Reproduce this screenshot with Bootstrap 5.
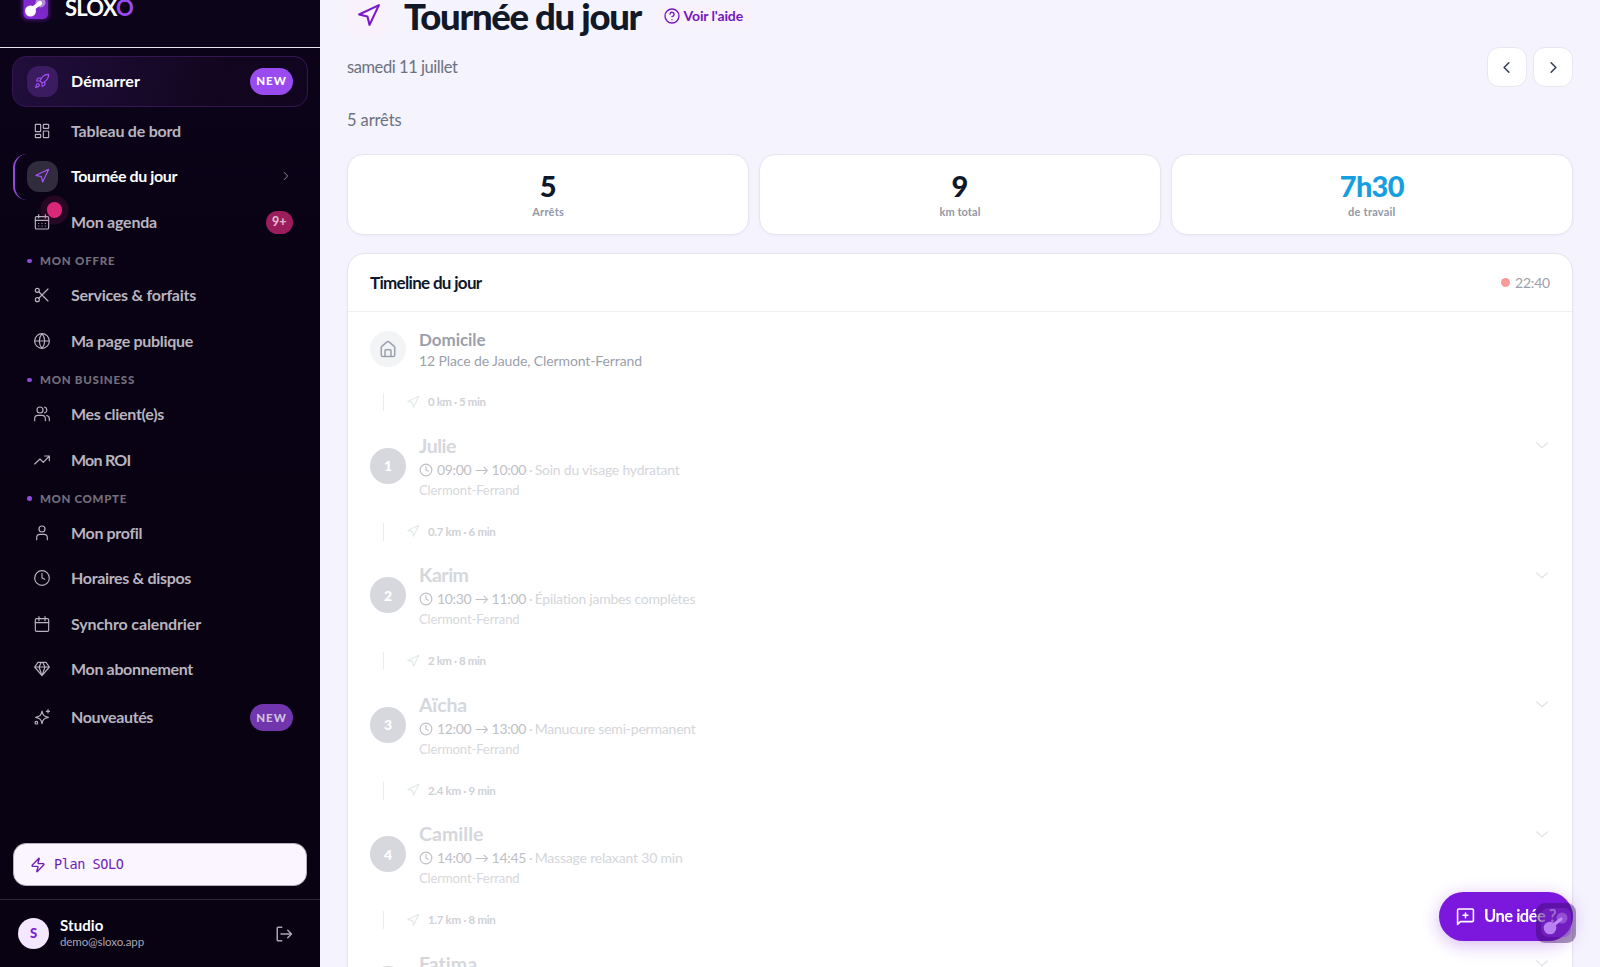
<!DOCTYPE html>
<html lang="fr">
<head>
<meta charset="utf-8">
<meta name="viewport" content="width=device-width, initial-scale=1">
<title>SLOXO – Tournée du jour</title>
<link href="https://cdn.jsdelivr.net/npm/bootstrap@5.3.0/dist/css/bootstrap.min.css" rel="stylesheet">
<style>
  body { font-family: Lato, "Liberation Sans", sans-serif; background: #f5f3fe; height: 967px; overflow: hidden; color: #0f172a; }
  svg { fill: none; stroke: currentColor; stroke-width: 2; stroke-linecap: round; stroke-linejoin: round; flex: none; display: block; }
  .blob { stroke: none; }
  [data-w] { white-space: nowrap; }
  .side { width: 320px; height: 967px; background: linear-gradient(#0c0419, #090214 30%, #080212); color: #fff; }
  .brand-row { height: 48px; border-bottom: 1.5px solid #e5e3ec; overflow: hidden; padding-left: 17px; }
  .brand-logo { width: 37px; height: 31px; margin-top: -7px; }
  .brand-name { font-size: 22px; font-weight: 700; line-height: 26px; margin: -5px 0 0 11px; }
  .violet { color: #9a4bf2; }
  .side-item { height: 45.55px; padding: 0 14px 0 14px; margin: 0 13px; color: #b8b4bf; font-weight: 700; font-size: 16px; }
  .side-item > span { margin-top: -1px; }
  .side-item .bubble { width: 31px; height: 31px; border-radius: 12px; margin-right: 13px; flex: none; }
  .side-item svg { width: 16px; height: 16px; stroke-width: 1.75; margin-top: -1px; margin-left: -1px; }
  .start { height: 51px; margin: 8px 12px 1.5px; padding: 0 14px; border: 1px solid #351653; border-radius: 14px; background: linear-gradient(100deg, #210e3c, #12061f 70%, #100520); color: #fff; }
  .start .bubble { background: #3b1c61; color: #a14ff2; }
  .start > * { position: relative; top: -.5px; }
  .current { color: #fff; border-left: 2px solid #9049d8; border-radius: 14px; padding-left: 12px; }
  .current .bubble { background: #302b3d; color: #a855f7; }
  .tall { height: 49px; }
  .pill { border-radius: 14px; font-weight: 900; color: #fff; display: flex; align-items: center; justify-content: center; }
  .pill-new { width: 43px; height: 27px; background: #9a4bef; font-size: 11.5px; }
  .pill-dim { background: #7136ad; color: #cfc3dd; }
  .pill-count { width: 27.500px; height: 22.5px; background: #9c1d5c; font-size: 12.5px; color: #dfb7cd; }
  .alert-dot { width: 15.5px; height: 15.5px; background: #db2777; border-radius: 50%; box-shadow: 0 0 0 6.5px rgba(219,39,119,.14); position: absolute; left: 19.5px; top: -4.5px; }
  .side-head { height: 27.75px; padding: 4px 0 0 27px; font-size: 11.5px; font-weight: 900; color: #736e7b; }
  .side-head i { width: 4.5px; height: 4.5px; border-radius: 50%; background: #9249dc; margin-right: 8.5px; }
  .plan { margin: 0 13px 13px; height: 43px; border-radius: 13px; background: #faf5ff; border: 1px solid #b8aec4; color: #6f1fb8; font-family: "DejaVu Sans Mono", monospace; font-size: 13.5px; padding-left: 16px; }
  .user { height: 68px; border-top: 1px solid #2b2635; padding: 0 27px 0 18px; }
  .avatar { width: 31px; height: 31px; border-radius: 50%; background: #f3e8ff; color: #7722d0; font-size: 13px; font-weight: 900; }
  .page { padding: 0 27px; }
  .title-row { height: 38px; }
  .title-icon { width: 43px; height: 44px; margin-top: -8px; border-radius: 13px; background: #f9f2fd; color: #7919c9; }
  h1 { font-size: 36.5px; font-weight: 900; line-height: 38px; margin: -6px 0 0 14px; color: #111827; }
  .help { color: #7416bd; background: #f8f2fd; font-size: 14px; font-weight: 700; padding: 0 8px 0 7px; height: 25px; border-radius: 12px; margin: -7px 0 0 15.5px; }
  .muted { color: #6b7280; font-size: 16.5px; line-height: 20px; margin-top: -1px; }
  .step { width: 40px; height: 40px; background: #fff; border: 1px solid #e8e7ee; border-radius: 12px; color: #374151; }
  .panel { background: #fff; border: 1px solid #e6e5ed; box-shadow: 0 1px 3px rgba(60,40,90,.04); }
  .stat { height: 81px; border-radius: 16px; padding-top: 14px; }
  .stat b { font-size: 29px; line-height: 34px; font-weight: 900; }
  .stat span { font-size: 11px; line-height: 14px; color: #9298a6; font-weight: 700; margin-top: 2px; }
  .timeline { border-radius: 18px 18px 0 0; height: 760px; margin-top: 17.5px; }
  .timeline-head { height: 58.5px; padding: 0 22px; border-bottom: 1px solid #f0f0f3; }
  .timeline-head b { font-size: 17px; }
  .home { height: 80px; padding: 19px 22px 0; }
  .dot { width: 36px; height: 36px; border-radius: 50%; flex: none; margin-right: 13px; }
  .home .dot { background: #f3f4f6; color: #9ca0ac; }
  .home b { font-size: 17px; line-height: 20px; color: #9b9fac; margin-top: -1px; }
  .home span { font-size: 14px; line-height: 20px; color: #9b9fac; margin-top: 1px; }
  .leg { height: 20px; padding-left: 35px; color: #cfd1d6; font-size: 11.5px; font-weight: 700; }
  .leg i { width: 1px; height: 18px; background: #ececf0; margin-right: 21.5px; }
  .leg svg { color: #e3e9ea; margin-right: 8.5px; margin-top: -1px; }
  .leg span { margin-top: -.5px; }
  .stop { height: 109.5px; padding: 0 22.5px 0 22px; }
  .stop .dot { background: #d7d8dd; color: #fff; font-weight: 900; font-size: 14px; margin-bottom: 2px; }
  .stop b { font-size: 19.5px; line-height: 24px; color: #d5d7dc; }
  .stop .when { font-size: 14px; line-height: 22px; height: 22px; margin-top: 1px; color: #bec0c5; }
  .stop .what { color: #d4d6da; }
  .stop .city { font-size: 13px; line-height: 19px; color: #d6d8dc; }
  .idea { right: 27px; bottom: 26.5px; width: 134px; height: 49px; border-radius: 25px; background: #7c18dd; color: #fff; font-size: 16.5px; font-weight: 700; padding-left: 17px; box-shadow: 0 4px 18px rgba(124,24,221,.3); }
  .mark-float { right: 24px; bottom: 24px; width: 40px; height: 40px; border-radius: 9px; background: rgba(52,10,92,.42); }
</style>
</head>
<body>
<svg width="0" height="0" class="position-absolute">
  <symbol id="send" viewBox="0 0 24 24"><path d="M3 11 22 2 13 21 11 13z"/></symbol>
  <symbol id="clock" viewBox="0 0 24 24"><circle cx="12" cy="12" r="10"/><path d="M12 6v6l4 2"/></symbol>
  <symbol id="down" viewBox="0 0 24 24"><path d="m4 9 8 7 8-7"/></symbol>
  <symbol id="right" viewBox="0 0 24 24"><path d="m9 18 6-6-6-6"/></symbol>
  <symbol id="left" viewBox="0 0 24 24"><path d="m15 18-6-6 6-6"/></symbol>
</svg>
<div class="d-flex">
  <aside class="side d-flex flex-column flex-shrink-0">
    <div class="brand-row d-flex align-items-start flex-shrink-0">
      <svg class="brand-logo blob" viewBox="0 0 37 31">
        <defs><linearGradient id="lg" x1="0" x2="1" y1="1" y2="0"><stop stop-color="#8a2be2"/><stop offset="1" stop-color="#6f25ad"/></linearGradient><filter id="glow" x="-50%" y="-50%" width="200%" height="200%"><feGaussianBlur stdDeviation="2"/></filter></defs>
        <rect x="5" y="0" width="27" height="27" rx="5" fill="#7a22d0" opacity=".6" filter="url(#glow)"/>
        <rect x="6.500" y="-2" width="24.500" height="28" rx="5" fill="url(#lg)"/>
        <circle cx="23.500" cy="9.500" r="5" fill="#fff" opacity=".45"/>
        <path d="M14 17 23 10" stroke="#fff" stroke-width="4"/><circle cx="13.500" cy="18" r="5.500" fill="#fff"/><circle cx="22.500" cy="10.500" r="2.300" fill="#fff"/>
      </svg>
      <div class="brand-name" data-w="68">SLOX<span class="violet">O</span></div>
    </div>
    <div class="side-item start d-flex align-items-center flex-shrink-0">
      <div class="bubble d-flex align-items-center justify-content-center"><svg viewBox="0 0 24 24"><path d="M4.500 16.500c-1.500 1.300-2 5-2 5s3.700-.5 5-2c.7-.8.7-2.100-.1-2.900a2.200 2.200 0 0 0-2.900-.1zM12 15l-3-3a22 22 0 0 1 2-4A12.900 12.900 0 0 1 22 2c0 2.700-.8 7.500-6 11a22.400 22.400 0 0 1-4 2zM9 12H4s.5-3 2-4c1.600-1.100 5 0 5 0M12 15v5s3-.5 4-2c1.100-1.600 0-5 0-5"/></svg></div>
      <span data-w="69">Démarrer</span><div class="pill pill-new ms-auto"><span data-w="30.500">NEW</span></div>
    </div>
    <div class="side-item d-flex align-items-center flex-shrink-0">
      <div class="bubble d-flex align-items-center justify-content-center"><svg viewBox="0 0 24 24"><rect x="2" y="2" width="8" height="11" rx="1"/><rect x="14" y="2" width="8" height="6" rx="1"/><rect x="14" y="12" width="8" height="10" rx="1"/><rect x="2" y="17" width="8" height="5" rx="1"/></svg></div><span data-w="110">Tableau de bord</span>
    </div>
    <div class="side-item current d-flex align-items-center flex-shrink-0">
      <div class="bubble d-flex align-items-center justify-content-center"><svg><use href="#send"/></svg></div><span data-w="106">Tournée du jour</span>
      <svg class="ms-auto" style="width:14px;height:14px;color:#7d7887"><use href="#right"/></svg>
    </div>
    <div class="side-item d-flex align-items-center flex-shrink-0">
      <div class="bubble position-relative d-flex align-items-center justify-content-center"><svg viewBox="0 0 24 24"><rect x="2" y="4" width="20" height="18.500" rx="2"/><path d="M7 1v5M17 1v5M2 9.500h20M7 14h.1M12 14h.1M17 14h.1M7 18h.1M12 18h.1M17 18h.1"/></svg><div class="alert-dot"></div></div><span data-w="86">Mon agenda</span><div class="pill pill-count ms-auto">9+</div>
    </div>
    <div class="side-head d-flex align-items-center flex-shrink-0"><i></i><span data-w="75.500">MON OFFRE</span></div>
    <div class="side-item d-flex align-items-center flex-shrink-0">
      <div class="bubble d-flex align-items-center justify-content-center"><svg viewBox="0 0 24 24"><circle cx="5" cy="5" r="3"/><circle cx="5" cy="19" r="3"/><path d="M7.100 7.100 21 21M21 3 7.100 16.900"/></svg></div><span data-w="125">Services &amp; forfaits</span>
    </div>
    <div class="side-item d-flex align-items-center flex-shrink-0">
      <div class="bubble d-flex align-items-center justify-content-center"><svg viewBox="0 0 24 24"><circle cx="12" cy="12" r="11"/><path d="M1 12h22M12 1a17 17 0 0 0 0 22 17 17 0 0 0 0-22"/></svg></div><span data-w="122">Ma page publique</span>
    </div>
    <div class="side-head d-flex align-items-center flex-shrink-0"><i></i><span data-w="95">MON BUSINESS</span></div>
    <div class="side-item d-flex align-items-center flex-shrink-0">
      <div class="bubble d-flex align-items-center justify-content-center"><svg viewBox="0 0 24 24"><path d="M17 22v-3a5 5 0 0 0-5-5H6a5 5 0 0 0-5 5v3"/><circle cx="9" cy="6" r="4.500"/><path d="M23 22v-3a5 5 0 0 0-4-4.800M16 1.700a4.500 4.500 0 0 1 0 8.700"/></svg></div><span data-w="93">Mes client(e)s</span>
    </div>
    <div class="side-item d-flex align-items-center flex-shrink-0">
      <div class="bubble d-flex align-items-center justify-content-center"><svg viewBox="0 0 24 24"><path d="M23 6 14 15.500 9 10.500 1 18M16 6h7v7"/></svg></div><span data-w="59.500">Mon ROI</span>
    </div>
    <div class="side-head d-flex align-items-center flex-shrink-0"><i></i><span data-w="87">MON COMPTE</span></div>
    <div class="side-item d-flex align-items-center flex-shrink-0">
      <div class="bubble d-flex align-items-center justify-content-center"><svg viewBox="0 0 24 24"><path d="M20 22v-3a5 5 0 0 0-5-5H9a5 5 0 0 0-5 5v3"/><circle cx="12" cy="6" r="4.500"/></svg></div><span data-w="71">Mon profil</span>
    </div>
    <div class="side-item d-flex align-items-center flex-shrink-0">
      <div class="bubble d-flex align-items-center justify-content-center"><svg viewBox="0 0 24 24"><circle cx="12" cy="12" r="11"/><path d="M12 5.500V12l4 2"/></svg></div><span data-w="120">Horaires &amp; dispos</span>
    </div>
    <div class="side-item d-flex align-items-center flex-shrink-0">
      <div class="bubble d-flex align-items-center justify-content-center"><svg viewBox="0 0 24 24"><rect x="2" y="4" width="20" height="19" rx="2"/><path d="M7.500 1v6M16.500 1v6M2 10h20"/></svg></div><span data-w="130">Synchro calendrier</span>
    </div>
    <div class="side-item d-flex align-items-center flex-shrink-0">
      <div class="bubble d-flex align-items-center justify-content-center"><svg viewBox="0 0 24 24"><path d="M6 2h12l5 7-11 13L1 9zM1 9h22M11 2 7.500 9 12 22l4.500-13L13 2"/></svg></div><span data-w="122">Mon abonnement</span>
    </div>
    <div class="side-item tall d-flex align-items-center flex-shrink-0">
      <div class="bubble d-flex align-items-center justify-content-center"><svg viewBox="0 0 24 24"><path d="M12 3c1 6 3 8 9.500 9.500C15 14 13 16 12 22c-1-6-3-8-9.500-9.500C9 11 11 9 12 3zM21 1v5M18.500 3.500h5"/><circle cx="3.500" cy="20.500" r="2"/></svg></div><span data-w="82">Nouveautés</span><div class="pill pill-new pill-dim ms-auto"><span data-w="30.500">NEW</span></div>
    </div>
    <div class="plan mt-auto d-flex align-items-center flex-shrink-0">
      <svg width="16" height="16" viewBox="0 0 24 24" class="me-2"><path d="M4 14a1 1 0 0 1-.8-1.600L13 2.200a.5.5 0 0 1 .9.500L12 8.700A1 1 0 0 0 13 10h7a1 1 0 0 1 .8 1.600L11 21.800a.5.5 0 0 1-.9-.5L12 15.300A1 1 0 0 0 11 14z"/></svg><span data-w="69.500">Plan SOLO</span>
    </div>
    <div class="user d-flex align-items-center flex-shrink-0">
      <div class="avatar d-flex align-items-center justify-content-center">S</div>
      <div class="d-flex flex-column align-items-start" style="margin-left:11px;margin-top:-2px"><b data-w="43.500" style="font-size:15px;line-height:18px">Studio</b><span data-w="84" style="font-size:11.500px;line-height:16px;color:#aaa6b1">demo@sloxo.app</span></div>
      <svg class="ms-auto" width="18" height="18" viewBox="0 0 24 24" style="color:#aaa6b1"><path d="M9 21H4a1 1 0 0 1-1-1V4a1 1 0 0 1 1-1h5M8 12h14M17 7l5 5-5 5"/></svg>
    </div>
  </aside>

  <main class="page flex-grow-1">
    <div class="title-row d-flex align-items-center">
      <div class="title-icon d-flex align-items-center justify-content-center"><svg width="25" height="25"><use href="#send"/></svg></div>
      <h1><span data-w="237">Tournée du jour</span></h1>
      <div class="help d-flex align-items-center gap-1"><svg width="16" height="16" viewBox="0 0 24 24"><circle cx="12" cy="12" r="10.500"/><path d="M9 9a3 3 0 0 1 6 1c0 2-3 3-3 3M12 17.500h.01"/></svg><span data-w="59.500">Voir l'aide</span></div>
    </div>
    <div class="d-flex align-items-center justify-content-between" style="height:58px">
      <span class="muted" data-w="110.500">samedi 11 juillet</span>
      <div class="d-flex" style="gap:6.500px"><div class="step d-flex align-items-center justify-content-center"><svg width="19" height="19"><use href="#left"/></svg></div><div class="step d-flex align-items-center justify-content-center"><svg width="19" height="19"><use href="#right"/></svg></div></div>
    </div>
    <div class="d-flex align-items-center" style="height:58px;padding-bottom:9px"><span class="muted" data-w="54.500">5 arrêts</span></div>
    <div class="d-flex" style="gap:9.500px">
      <div class="panel stat d-flex flex-column align-items-center col"><b>5</b><span data-w="32">Arrêts</span></div>
      <div class="panel stat d-flex flex-column align-items-center col"><b>9</b><span data-w="41">km total</span></div>
      <div class="panel stat d-flex flex-column align-items-center col"><b data-w="64" style="color:#169fe0">7h30</b><span data-w="47.500">de travail</span></div>
    </div>
    <section class="panel timeline">
      <div class="timeline-head d-flex align-items-center justify-content-between"><b data-w="111.500">Timeline du jour</b>
        <div class="d-flex align-items-center" style="gap:5px;color:#9ca0ab;font-size:14px"><i class="rounded-circle" style="width:9px;height:9px;background:#f99b9b"></i><span data-w="35">22:40</span></div></div>
      <div class="home d-flex">
        <div class="dot d-flex align-items-center justify-content-center"><svg width="18" height="18" viewBox="0 0 24 24"><path d="M3 10a2 2 0 0 1 .7-1.500l7-6a2 2 0 0 1 2.600 0l7 6A2 2 0 0 1 21 10v10a2 2 0 0 1-2 2H5a2 2 0 0 1-2-2zM8 22v-8a1 1 0 0 1 1-1h6a1 1 0 0 1 1 1v8"/></svg></div>
        <div class="d-flex flex-column align-items-start"><b data-w="66.500">Domicile</b><span data-w="223">12 Place de Jaude, Clermont-Ferrand</span></div>
      </div>
      <div id="stops"></div>
    </section>
  </main>
</div>
<div class="idea position-fixed d-flex align-items-center"><svg width="19" height="19" viewBox="0 0 24 24"><path d="M2 22V4a1.500 1.500 0 0 1 1.500-1.500h17A1.500 1.500 0 0 1 22 4v13a1.500 1.500 0 0 1-1.500 1.500H5.500zM12 7.500v6M9 10.500h6"/></svg><span data-w="72" style="margin-left:9px">Une idée ?</span></div>
<div class="mark-float position-fixed"><svg class="blob" width="40" height="40" viewBox="0 0 40 40"><rect x="5" y="5" width="30" height="29" rx="7" fill="#8e30e4" opacity=".4"/><circle cx="26" cy="15" r="5.500" fill="#c89bf5" opacity=".4"/><path d="M15 24 25 16" stroke="#c08af5" stroke-width="3.500"/><circle cx="14" cy="25" r="6.300" fill="#b980f2"/></svg></div>
<script>
  const stops = [
    ["0 km · 5 min", 57.5, "Julie", 37, "09:00 → 10:00", "Soin du visage hydratant", 145],
    ["0.7 km · 6 min", 67.5, "Karim", 49.5, "10:30 → 11:00", "Épilation jambes complètes", 161],
    ["2 km · 8 min", 57.5, "Aïcha", 48, "12:00 → 13:00", "Manucure semi-permanent", 161],
    ["2.4 km · 9 min", 67.5, "Camille", 64.5, "14:00 → 14:45", "Massage relaxant 30 min", 148],
    ["1.7 km · 8 min", 67.5, "Fatima", 58.5, "15:30 → 16:30", "Soin des pieds", 90]
  ];
  document.getElementById("stops").innerHTML = stops.map((s, n) => `
    <div class="leg d-flex align-items-center"><i></i><svg width="14" height="14"><use href="#send"/></svg><span data-w="${s[1]}">${s[0]}</span></div>
    <div class="stop d-flex align-items-center">
      <div class="dot d-flex align-items-center justify-content-center">${n + 1}</div>
      <div class="d-flex flex-column align-items-start">
        <b data-w="${s[3]}">${s[2]}</b>
        <div class="when d-flex align-items-center"><svg width="14" height="14" style="margin-right:4px"><use href="#clock"/></svg><span data-w="89">${s[4]}</span><span class="what" style="margin:0 2px 0 3px">·</span><span class="what" data-w="${s[6]}">${s[5]}</span></div>
        <span class="city" data-w="100.5">Clermont-Ferrand</span>
      </div>
      <svg class="ms-auto" width="16" height="16" style="color:#e2e4e8;margin-bottom:43px"><use href="#down"/></svg>
    </div>`).join("");
  document.querySelectorAll("[data-w]").forEach(el => {
    const n = el.textContent.length, w = el.getBoundingClientRect().width;
    el.style.letterSpacing = ((+el.dataset.w - w) / n).toFixed(3) + "px";
  });
</script>
<script src="https://cdn.jsdelivr.net/npm/bootstrap@5.3.0/dist/js/bootstrap.bundle.min.js"></script>
</body>
</html>
